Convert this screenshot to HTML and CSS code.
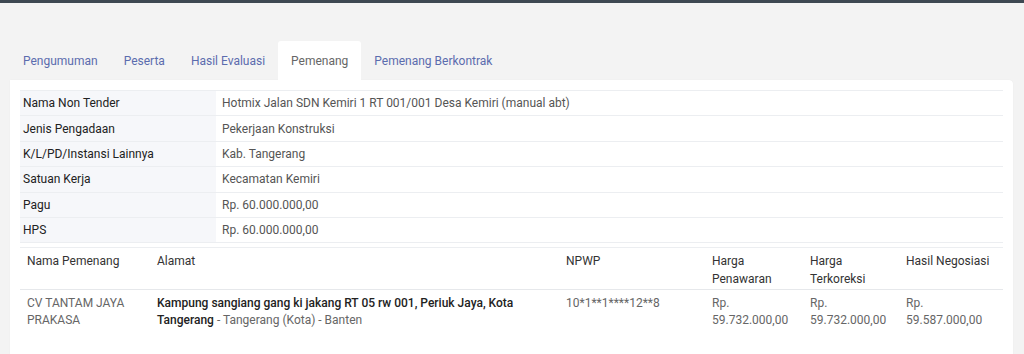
FILE: index.html
```html
<!DOCTYPE html>
<html lang="id">
<head>
<meta charset="utf-8">
<title>Pemenang</title>
<link rel="stylesheet" href="styles.css">
</head>
<body>
<div class="topbar"></div>
<main class="page">
  <nav class="tabs">
    <a class="tab">Pengumuman</a>
    <a class="tab">Peserta</a>
    <a class="tab">Hasil Evaluasi</a>
    <a class="tab active">Pemenang</a>
    <a class="tab">Pemenang Berkontrak</a>
  </nav>
  <section class="card">
    <table class="info">
      <tr><th>Nama Non Tender</th><td>Hotmix Jalan SDN Kemiri 1 RT 001/001 Desa Kemiri (manual abt)</td></tr>
      <tr><th>Jenis Pengadaan</th><td>Pekerjaan Konstruksi</td></tr>
      <tr><th>K/L/PD/Instansi Lainnya</th><td>Kab. Tangerang</td></tr>
      <tr><th>Satuan Kerja</th><td>Kecamatan Kemiri</td></tr>
      <tr><th>Pagu</th><td>Rp. 60.000.000,00</td></tr>
      <tr><th>HPS</th><td>Rp. 60.000.000,00</td></tr>
    </table>
    <table class="winners">
      <colgroup>
        <col class="c1"><col class="c2"><col class="c3"><col class="c4"><col class="c5"><col class="c6">
      </colgroup>
      <thead>
        <tr>
          <th>Nama Pemenang</th>
          <th>Alamat</th>
          <th>NPWP</th>
          <th>Harga Penawaran</th>
          <th>Harga Terkoreksi</th>
          <th>Hasil Negosiasi</th>
        </tr>
      </thead>
      <tbody>
        <tr>
          <td>CV TANTAM JAYA PRAKASA</td>
          <td><span class="addr-main">Kampung sangiang gang ki jakang RT 05 rw 001, Periuk Jaya, Kota Tangerang</span> - Tangerang (Kota) - Banten</td>
          <td>10*1**1****12**8</td>
          <td>Rp. 59.732.000,00</td>
          <td>Rp. 59.732.000,00</td>
          <td>Rp. 59.587.000,00</td>
        </tr>
      </tbody>
    </table>
  </section>
</main>
</body>
</html>
```
FILE: styles.css
```css
html, body {
  margin: 0;
  padding: 0;
  height: 100%;
  overflow: hidden;
}
body {
  background: #f3f3f3;
  font-family: Roboto, "Liberation Sans", Arial, sans-serif;
  font-size: 12px;
  color: #333;
}
.topbar {
  height: 3px;
  background: #3e4852;
}
.page {
  padding: 38px 11px 0 10px;
}
.tabs {
  display: flex;
  height: 39px;
}
.tab {
  display: flex;
  align-items: center;
  padding: 0 13px;
  color: #5b6cae;
  font-size: 12px;
  cursor: pointer;
}
.tab.active {
  background: #fff;
  color: #666;
  border-radius: 3px 3px 0 0;
}
.card {
  background: #fff;
  border-radius: 0 4px 0 0;
  padding: 10px 10px 60px;
  box-shadow: 0 0 1px rgba(0,0,0,0.08);
}
table {
  border-collapse: collapse;
  width: 100%;
}
.info {
  border-top: 1px solid #eceef1;
}
.info th,
.info td {
  height: 24.4px;
  padding: 0 0 0 3px;
  border-bottom: 1px solid #eceef1;
  font-weight: 400;
  text-align: left;
  vertical-align: middle;
  line-height: 16px;
}
.info th {
  width: 193px;
  background: #f6f7fa;
  color: #222;
}
.info td {
  padding-left: 6px;
  color: #555;
}
.winners {
  margin-top: 4px;
  table-layout: fixed;
  border-top: 1px solid #eceef1;
}
.c1 { width: 130px; }
.c2 { width: 409px; }
.c3 { width: 146px; }
.c4 { width: 98px; }
.c5 { width: 96px; }
.c6 { width: 104px; }
.winners th,
.winners td {
  text-align: left;
  vertical-align: top;
  font-weight: 400;
}
.winners th {
  color: #333;
  line-height: 18px;
  padding: 4px 7px 1px;
  border-bottom: 1px solid #e6e8eb;
}
.winners td {
  color: #666;
  line-height: 17px;
  padding: 5px 7px;
}
.addr-main {
  font-weight: 500;
  color: #222;
}
```
